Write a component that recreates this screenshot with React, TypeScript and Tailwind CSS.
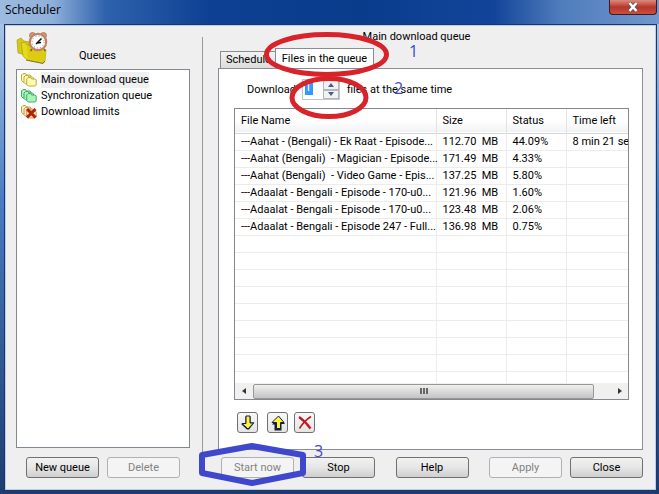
import type { ReactNode } from 'react'

const queues = [
  { name: 'Main download queue', fill: '#fffbb0', stroke: '#b3a030', selected: true },
  { name: 'Synchronization queue', fill: '#a6f5bb', stroke: '#38a35a' },
  { name: 'Download limits', fill: '#f7ecc0', stroke: '#bd9440', blocked: true },
]

const files = [
  { name: '---Aahat - (Bengali) - Ek Raat - Episode...', size: '112.70  MB', status: '44.09%', left: '8 min 21 sec' },
  { name: '---Aahat (Bengali)  - Magician - Episode...', size: '171.49  MB', status: '4.33%', left: '' },
  { name: '---Aahat (Bengali)  - Video Game - Epis...', size: '137.25  MB', status: '5.80%', left: '' },
  { name: '---Adaalat - Bengali - Episode - 170-u0...', size: '121.96  MB', status: '1.60%', left: '' },
  { name: '---Adaalat - Bengali - Episode - 170-u0...', size: '123.48  MB', status: '2.06%', left: '' },
  { name: '---Adaalat - Bengali - Episode 247 - Full...', size: '136.98  MB', status: '0.75%', left: '' },
]

const emptyRows = [0, 1, 2, 3, 4, 5, 6, 7]

function FolderIcon({ fill, stroke, blocked }: { fill: string; stroke: string; blocked?: boolean }) {
  const folder = 'M0.5 7.5V2L2 0.5H4.5L5.500 2H9L10 3V8L9 9H2Z'
  return (
    <svg className="w-4 h-3.5 shrink-0" viewBox="0 0 16 14" fill={fill} stroke={stroke} strokeWidth=".9">
      <path d={folder} />
      <path d={folder} transform="translate(2.5 2)" />
      <path d={folder} transform="translate(5.200 4)" />
      {blocked && <path d="M6 4L14.500 12.500M14.500 4L6 12.500" stroke="#b3200c" strokeWidth="3" />}
    </svg>
  )
}

function SchedulerIcon() {
  return (
    <svg className="w-8 h-8" viewBox="0 0 32 32">
      <path d="M1 8L5 6L8 9L13 10V26L6 22L2 21Z" fill="#d9c813" stroke="#a3950a" strokeWidth=".6" />
      <path d="M5 11L9 10L11 13L30 18L29 29L27 31L11 28L7 24Z" fill="#e6d91c" stroke="#a3950a" strokeWidth=".6" />
      <path d="M11 14L30 18L28 30L12 27Z" fill="#dccb10" />
      <path d="M10 28L27 31.5L29 29" fill="none" stroke="#7d7420" />
      <circle cx="16.500" cy="3.500" r="3" fill="#d49a70" stroke="#8a5a3a" strokeWidth=".6" />
      <circle cx="27.500" cy="3.500" r="3" fill="#d49a70" stroke="#8a5a3a" strokeWidth=".6" />
      <path d="M16 17L14.500 19M28 17L29.500 19" stroke="#8a5a3a" strokeWidth="1.6" />
      <circle cx="22" cy="10" r="8.2" fill="#fff" stroke="#c08560" strokeWidth="2.2" />
      <circle cx="22" cy="10" r="6" fill="none" stroke="#667" strokeWidth="1" strokeDasharray=".7 2.44" />
      <path d="M20 12L25.500 6.500M21 11L25 10.500" stroke="#111" strokeWidth="1.5" />
    </svg>
  )
}

function PushButton({ children, disabled }: { children: ReactNode; disabled?: boolean }) {
  return (
    <button
      disabled={disabled}
      className="w-[73px] h-[21px] shrink-0 rounded-[3px] border border-[#707070] bg-linear-to-b from-[#f2f2f2] via-[#e6e6e6] to-[#cfcfcf] text-center disabled:border-[#adb2b5] disabled:bg-none disabled:bg-[#f4f4f4] disabled:text-[#838383]"
    >
      {children}
    </button>
  )
}

function ToolButton({ label, children }: { label: string; children: ReactNode }) {
  return (
    <button
      aria-label={label}
      className="flex size-[21px] items-center justify-center rounded-[3px] border border-[#707070] bg-linear-to-b from-[#f8f8f8] to-[#e4e4e4]"
    >
      {children}
    </button>
  )
}

export default function App() {
  return (
    <div className="relative flex min-h-screen flex-col overflow-hidden bg-linear-to-b from-[#a9c3e4] from-5% via-[#4a7cc4] via-40% to-[#1f3c70] pr-[2px] pb-[3px] pl-1 font-[Roboto,sans-serif] text-[11px] leading-4 text-black">
      {/* Title bar */}
      <header className="-mr-[2px] -ml-1 flex h-6 items-start justify-between bg-[linear-gradient(90deg,#9dbbe0_0%,#8fb0da_8%,#2f62ad_16%,#0d4092_32%,#0a3c8c_55%,#12459a_75%,#4f7cbc_85%,#7197cd_100%)] pr-[2px] pl-[5px]">
        <h1 className="pt-[2px] font-['Open_Sans',sans-serif] text-[12px]">Scheduler</h1>
        <button
          aria-label="Close window"
          className="flex h-[15px] w-12 items-center justify-center rounded-b-[4px] border border-t-0 border-[#3b1a20] bg-linear-to-b from-[#d98a80] via-[#b8352a] to-[#c9503c]"
        >
          <svg className="h-2.5 w-3" viewBox="0 0 12 10">
            <path d="M2.500 1L9.500 9M9.500 1L2.500 9" stroke="#555" strokeWidth="4" />
            <path d="M2.500 1L9.500 9M9.500 1L2.500 9" stroke="#fff" strokeWidth="2.6" />
          </svg>
        </button>
      </header>

      <main className="flex flex-1 border border-[#1b3768] bg-[#efefef] pr-[13px] pl-[11px] outline outline-[#b8cde8] -outline-offset-2">
        {/* Queues */}
        <section className="flex w-[174px] shrink-0 flex-col pt-[7px] pb-3">
          <div className="flex h-[37px] items-start">
            <SchedulerIcon />
            <h2 className="pt-4 pl-[31px]">Queues</h2>
          </div>
          <ul className="flex-1 border border-[#828790] bg-white pt-0.5 pl-1">
            {queues.map((q) => (
              <li key={q.name} className="flex h-4 items-center gap-1">
                <FolderIcon fill={q.fill} stroke={q.stroke} blocked={q.blocked} />
                <span className={q.selected ? 'bg-[#f0f0f0]' : ''}>{q.name}</span>
              </li>
            ))}
          </ul>
          <div className="flex gap-2 pt-[9px] pl-[10px]">
            <PushButton>New queue</PushButton>
            <PushButton disabled>Delete</PushButton>
          </div>
        </section>

        <div className="mt-3 mr-[15px] mb-9 ml-3 w-px bg-[#9a9a9a]" />

        {/* Selected queue */}
        <section className="flex min-w-0 flex-1 flex-col pt-1 pb-3">
          <h2 className="pr-7 text-center">Main download queue</h2>
          <div className="-mb-px flex items-end pt-[3px] pl-[2px]" role="tablist">
            <button role="tab" className="h-[18px] w-[55px] border border-r-0 border-[#898c95] bg-linear-to-b from-[#f2f2f2] to-[#dcdcdc] pl-[5px] text-left">
              Schedule
            </button>
            <button role="tab" aria-selected="true" className="h-[21px] w-[99px] border border-b-0 border-[#898c95] bg-white text-center">
              Files in the queue
            </button>
          </div>

          <div className="flex flex-1 flex-col border border-[#898c95] bg-white pr-[13px] pb-4 pl-[15px]">
            <div className="flex items-center gap-[7px] pt-2.5 pb-2 pl-[13px]">
              <label htmlFor="count" className="w-12">Download</label>
              <div className="flex h-[21px] w-[38px] border border-[#c3c5cb]">
                <input id="count" defaultValue="1" className="mt-px mr-auto ml-[2px] h-3.5 w-2 bg-[#3399ff] text-white" />
                <div className="flex w-4 flex-col">
                  <button aria-label="More" className="flex flex-1 items-center justify-center border border-[#b4b4ba] bg-[#f2f2f2]">
                    <svg className="h-1 w-1.5" viewBox="0 0 6 4"><path d="M0 4L3 0L6 4Z" fill="#4b5a8a" /></svg>
                  </button>
                  <button aria-label="Fewer" className="flex flex-1 items-center justify-center border border-[#b4b4ba] bg-[#f2f2f2]">
                    <svg className="h-1 w-1.5" viewBox="0 0 6 4"><path d="M0 0L3 4L6 0Z" fill="#4b5a8a" /></svg>
                  </button>
                </div>
              </div>
              <span>files at the same time</span>
            </div>

            <div className="flex flex-1 flex-col overflow-hidden border border-[#828790]">
              <table className="w-full table-fixed border-collapse">
                <thead>
                  <tr className="h-6 border-b border-[#d5d5d5] bg-linear-to-b from-white from-50% to-[#f1f2f4] text-left">
                    <th className="w-[201px] border-r border-[#e2e3e6] pl-1.5 font-normal">File Name</th>
                    <th className="w-[70px] border-r border-[#e2e3e6] pl-1.5 font-normal">Size</th>
                    <th className="w-[60px] border-r border-[#e2e3e6] pl-1.5 font-normal">Status</th>
                    <th className="pl-1.5 font-normal">Time left</th>
                  </tr>
                </thead>
                <tbody className="whitespace-pre">
                  {files.map((f, i) => (
                    <tr key={i} className="h-[17px] border-b border-[#ececec]">
                      <td className="border-r border-[#ececec] pl-1.5">{f.name}</td>
                      <td className="border-r border-[#ececec] pl-1.5">{f.size}</td>
                      <td className="border-r border-[#ececec] pl-1.5">{f.status}</td>
                      <td className="overflow-hidden pl-1.5">{f.left}</td>
                    </tr>
                  ))}
                  {emptyRows.map((i) => (
                    <tr key={i} className="h-[17px] border-b border-[#ececec]">
                      <td className="border-r border-[#ececec]" />
                      <td className="border-r border-[#ececec]" />
                      <td className="border-r border-[#ececec]" />
                      <td />
                    </tr>
                  ))}
                  <tr className="h-3">
                    <td className="border-r border-[#ececec]" />
                    <td className="border-r border-[#ececec]" />
                    <td className="border-r border-[#ececec]" />
                    <td />
                  </tr>
                </tbody>
              </table>
              <div className="mt-auto flex h-4 items-center bg-[#f0f0f0] pr-[34px]">
                <svg className="mx-[7px] h-1.5 w-1" viewBox="0 0 4 6"><path d="M4 0L0 3L4 6Z" fill="#333" /></svg>
                <div className="flex h-[15px] flex-1 items-center justify-center gap-px rounded-[2px] border border-[#979797] bg-linear-to-b from-[#f0f0f0] to-[#c4c4c4]">
                  <i className="h-1.5 w-[2px] bg-[#666]" />
                  <i className="h-1.5 w-[2px] bg-[#666]" />
                  <i className="h-1.5 w-[2px] bg-[#666]" />
                </div>
                <svg className="-mr-7 ml-6 h-1.5 w-1" viewBox="0 0 4 6"><path d="M0 0L4 3L0 6Z" fill="#333" /></svg>
              </div>
            </div>

            <div className="flex pt-3 pl-[3px]">
              <ToolButton label="Move down">
                <svg className="size-4" viewBox="0 0 16 16" strokeLinejoin="round">
                  <path d="M5.500 1.500H10.500V7.500H14.500L9 14.500H7L1.500 9.500V8.500H5.500Z" fill="#111b45" />
                  <path d="M6 1H10V8H13.500L8 14L2 8.500H6Z" fill="#fff33a" stroke="#111b45" />
                </svg>
              </ToolButton>
              <div className="pr-1.5 pl-[9px]">
                <ToolButton label="Move up">
                  <svg className="size-4" viewBox="0 0 16 16" strokeLinejoin="round">
                    <path d="M4.500 15.500H11.500V9H15L8.500 2L2 9.500H4.500Z" fill="#111b45" />
                    <path d="M6.500 13.500H10.500V7.500H14L8.500 1L2 7.500H6.500Z" fill="#fff33a" stroke="#111b45" />
                  </svg>
                </ToolButton>
              </div>
              <ToolButton label="Remove">
                <svg className="size-4" viewBox="0 0 16 16" fill="none" stroke="#c01822">
                  <path d="M2 2Q8 6 13.500 13.500" strokeWidth="2.2" />
                  <path d="M14 1.500Q7 6 2.500 13.500" strokeWidth="1.6" />
                </svg>
              </ToolButton>
            </div>
          </div>

          <div className="flex justify-between pt-[7px] pl-[3px]">
            <div className="flex gap-2">
              <PushButton disabled>Start now</PushButton>
              <PushButton>Stop</PushButton>
            </div>
            <PushButton>Help</PushButton>
            <div className="flex gap-2">
              <PushButton disabled>Apply</PushButton>
              <PushButton>Close</PushButton>
            </div>
          </div>
        </section>
      </main>

      {/* Hand-drawn step marks */}
      <svg className="pointer-events-none absolute top-0 left-0 h-[494px] w-[659px]" viewBox="0 0 659 494" fill="none">
        <ellipse cx="326.500" cy="54.500" rx="60" ry="20" stroke="#d8232a" strokeWidth="5" />
        <ellipse cx="329" cy="97.500" rx="37" ry="19" stroke="#d8232a" strokeWidth="5" />
        <path d="M202 455L252 446L303 455V473L252 483L202 473Z" stroke="#3f48cc" strokeWidth="6" strokeLinejoin="round" />
      </svg>
      <span className="absolute top-[41px] left-[409px] font-['Open_Sans',sans-serif] text-[16px] leading-5 text-[#3f48cc]">1</span>
      <span className="absolute top-[78px] left-[394px] font-['Open_Sans',sans-serif] text-[16px] leading-5 text-[#3f48cc]">2</span>
      <span className="absolute top-[441px] left-[314px] font-['Open_Sans',sans-serif] text-[16px] leading-5 text-[#3f48cc]">3</span>
    </div>
  )
}
